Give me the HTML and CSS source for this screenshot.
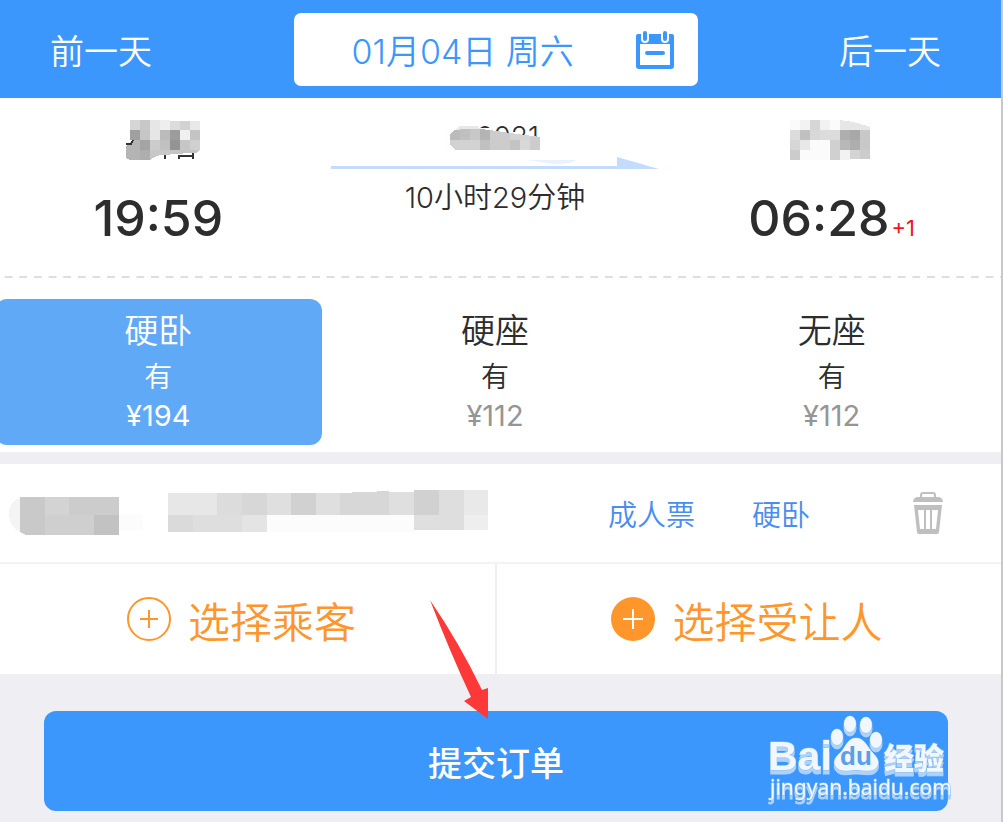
FILE: index.html
```html
<!DOCTYPE html>
<html lang="zh-CN">
<head>
    <meta charset="UTF-8">
    <meta name="viewport" content="width=device-width, initial-scale=1.0">
    <title>提交订单</title>
    <link rel="stylesheet" href="styles.css">
</head>
<body>
    <header class="date-bar">
        <button class="day-btn" type="button">前一天</button>
        <button class="date-btn" type="button">
            <span>01月04日 周六</span>
            <svg width="38" height="38" viewBox="0 0 38 38" aria-hidden="true">
                <path fill="#3b97fc" fill-rule="evenodd" d="M2 3h34q2 0 2 2v30q0 3-3 3H3q-3 0-3-3V5q0-2 2-2zM4 13v21h30V13z"/>
                <path stroke="#fff" stroke-width="8" stroke-linecap="round" d="M9 2v6M29 2v6"/>
                <path stroke="#3b97fc" stroke-width="4" stroke-linecap="round" d="M9 2v6M29 2v6M11 22h16"/>
            </svg>
        </button>
        <button class="day-btn" type="button">后一天</button>
    </header>

    <main>
        <section class="trip">
            <div class="stop">
                <svg class="mosaic" width="86" height="40" viewBox="-8 0 86 40" aria-hidden="true">
                    <path fill="#d6d6d6" d="M7 0h10v10H7z"/><path fill="#c8c8c8" d="M17 0h10v10H17z"/><path fill="#e6e6e6" d="M27 0h10v20H27z"/><path fill="#eee" d="M37 0h10v10H37z"/><path fill="#dcdcdc" d="M47 1h10v9H47z"/><path fill="#d2d2d2" d="M57 1h10v9H57z"/><path fill="#e8e8e8" d="M67 1h10v9H67z"/>
                    <path fill="#a0a0a0" d="M7 10h10v10H7z"/><path fill="#c6c6c6" d="M17 10h10v10H17z"/><path fill="#bbb" d="M37 10h10v10H37z"/><path fill="#9c9c9c" d="M47 10h10v10H47z"/><path fill="#f0f0f0" d="M57 10h10v10H57z"/><path fill="#c4c4c4" d="M67 10h10v10H67z"/>
                    <path fill="#b4b4b4" d="M3 26l7-6h7v20H7l-4-2z"/><path fill="#a4a4a4" d="M17 20h10v10H17z"/><path fill="#ccc" d="M27 20h10v10H27z"/><path fill="#c0c0c0" d="M37 20h10v10H37z"/><path fill="#949494" d="M47 20h10v10H47z"/><path fill="#c6c6c6" d="M57 20h10v10H57z"/><path fill="#d0d0d0" d="M67 20h10v10H67z"/>
                    <path fill="#aeaeae" d="M17 30h10v10H17z"/><path fill="#c8c8c8" d="M27 30h20v5H37l-7 3-3 2z"/><path fill="#c4c4c4" d="M47 30h30l-4 3-26 1z"/>
                    <path fill="none" stroke="#333" stroke-width="2" d="M3 24h5l2-4M42 35v4M56 35v4M55 36h14M70 33v6"/>
                </svg>
                <div class="time">19:59</div>
            </div>
            <div class="route">
                <svg class="mosaic" width="100" height="32" viewBox="0 0 100 32" aria-hidden="true">
                    <text class="train-no" x="94" y="27" text-anchor="end">0021</text>
                    <path fill="#fefefe" d="M0 8h50v20H0z"/>
                    <path fill="#e8e8e8" d="M10 10l4-4h18l6 4z"/>
                    <path fill="#bbb" d="M5 15l4-5h6v10H5z"/><path fill="#c0c0c0" d="M15 9h10v11H15z"/><path fill="#c8c8c8" d="M25 9h10v11H25z"/><path fill="#b4b4b4" d="M35 9l10 1v10H35z"/><path fill="#ccc" d="M45 10l20 3v7H45z"/><path fill="#d4d4d4" d="M65 13l30 4v3H65z"/>
                    <path fill="#d2d2d2" d="M5 20h30v10H10l-5-5z"/><path fill="#c0c0c0" d="M35 20h10v10H35z"/><path fill="#ccc" d="M45 20h20v10H45z"/><path fill="#c4c4c4" d="M65 20h10v10H65z"/><path fill="#d8d8d8" d="M75 20h10v10H75z"/><path fill="#ccc" d="M85 17h10v13H85z"/>
                </svg>
                <svg width="328" height="16" viewBox="0 0 328 16" aria-hidden="true">
                    <path fill="#e9f1fe" d="M196 4h49q-4 4-22 4z"/>
                    <path fill="#c3dcfd" d="M0 10h286V1l42 12H0z"/>
                </svg>
                <div class="duration">10小时29分钟</div>
            </div>
            <div class="stop">
                <svg class="mosaic" width="84" height="40" viewBox="0 0 84 40" aria-hidden="true">
                    <path fill="#fbfbfb" d="M0 0h50v40H0z"/><path fill="#f2f2f2" d="M10 0h10v10H10zM30 0h10v10H30zM50 30h10v10H50z"/><path fill="#d6d6d6" d="M20 0h10v10H20zM0 20h10v10H0z"/><path fill="#e6e6e6" d="M50 0l13 2 15 4 2 2v2H50z"/>
                    <path fill="#dcdcdc" d="M0 10h10v10H0zM30 10h20v10H30z"/><path fill="#c0c0c0" d="M10 10h10v10H10z"/><path fill="#d8d8d8" d="M20 10h10v10H20z"/><path fill="#aeaeae" d="M50 10h10v10H50zM60 20h10v10H60z"/><path fill="#a8a8a8" d="M60 10h10v10H60z"/><path fill="#c8c8c8" d="M70 10h10v20H70z"/>
                    <path fill="#e8e8e8" d="M10 20h10v10H10z"/><path fill="#d0d0d0" d="M40 20h10v20H40z"/><path fill="#b8b8b8" d="M50 20h10v10H50z"/>
                    <path fill="#ccc" d="M0 30h10v10H0zM70 30h10v9H70z"/><path fill="#d4d4d4" d="M60 30h10v9H60z"/>
                </svg>
                <div class="time">06:28<span class="next-day">+1</span></div>
            </div>
        </section>

        <section class="seats">
            <button class="seat active" type="button">
                <span class="seat-name">硬卧</span>
                <span class="seat-left">有</span>
                <span class="seat-price">¥194</span>
            </button>
            <button class="seat" type="button">
                <span class="seat-name">硬座</span>
                <span class="seat-left">有</span>
                <span class="seat-price">¥112</span>
            </button>
            <button class="seat" type="button">
                <span class="seat-name">无座</span>
                <span class="seat-left">有</span>
                <span class="seat-price">¥112</span>
            </button>
        </section>

        <section class="passenger">
            <svg class="mosaic" width="480" height="48" viewBox="0 0 480 48" aria-hidden="true">
                <path fill="#f4f4f4" d="M11 9Q0 12 0 25t11 18z"/>
                <path fill="#fcfcfc" d="M110 25h24v16h-24zM258 25h147v18H258z"/>
                <path fill="#c9c9c9" d="M11 8h25v38H17l-6-3z"/><path fill="#d3d3d3" d="M36 8h24v18H36z"/><path fill="#ccc" d="M60 8h50v18H60z"/>
                <path fill="#cfcfcf" d="M36 26h49v20H36z"/><path fill="#c2c2c2" d="M85 26h25v20H85z"/>
                <path fill="#e7e7e7" d="M159 4h49v22h-49z"/><path fill="#dcdcdc" d="M208 4h25v22h-25z"/><path fill="#d7d7d7" d="M233 4h25v22h-25z"/><path fill="#dfdfdf" d="M258 4h24v22h-24zM307 4h24v22h-24zM380 3h25v23h-25z"/><path fill="#d1d1d1" d="M282 4h25v22h-25zM405 1h25v25h-25z"/><path fill="#d7d7d7" d="M331 4l49-2v24h-49z"/><path fill="#dedede" d="M430 1h25v40h-25z"/><path fill="#e9e9e9" d="M455 1h24v25h-24z"/>
                <path fill="#dadada" d="M159 26h25v17h-25z"/><path fill="#dedede" d="M184 26h49v17h-49z"/><path fill="#e4e4e4" d="M233 26h25v17h-25z"/><path fill="#dfdfdf" d="M405 26h25v15h-25z"/><path fill="#eee" d="M455 26h24v15h-24z"/>
            </svg>
            <a class="tag" href="#">成人票</a>
            <a class="tag" href="#">硬卧</a>
            <button class="delete-btn" type="button" aria-label="删除">
                <svg width="30" height="42" viewBox="0 0 30 42" aria-hidden="true">
                    <path fill="none" stroke="#bfbfbf" stroke-width="2" d="M8 6V3q0-2 2-2h10q2 0 2 2v3"/>
                    <path fill="#bfbfbf" d="M4 5h22q4 1 4 5H0q0-4 4-5z"/>
                    <path fill="#bfbfbf" fill-rule="evenodd" d="M1 13h28l-3 27q0 2-2 2H6q-2 0-2-2zM5 18l2 19h4V18zM13 18v19h4V18zM19 18v19h4l2-19z"/>
                </svg>
            </button>
        </section>

        <section class="choose">
            <button class="choose-btn" type="button">
                <svg width="44" height="44" viewBox="0 0 44 44" aria-hidden="true">
                    <circle cx="22" cy="22" r="21" fill="none" stroke="#ff962b" stroke-width="2"/>
                    <path stroke="#ff962b" stroke-width="2" d="M22 13v18M13 22h18"/>
                </svg>
                <span>选择乘客</span>
            </button>
            <button class="choose-btn" type="button">
                <svg width="44" height="44" viewBox="0 0 44 44" aria-hidden="true">
                    <circle cx="22" cy="22" r="22" fill="#ff962b"/>
                    <path stroke="#fff" stroke-width="2" d="M22 12v20M12 22h20"/>
                </svg>
                <span>选择受让人</span>
            </button>
        </section>
    </main>

    <footer class="submit-bar">
        <button class="submit-btn" type="button">提交订单</button>

        <svg class="pointer" width="60" height="120" viewBox="0 0 60 120" aria-hidden="true">
            <path fill="#fd3838" d="M0 0q30 44 52 90l6-2v31L34 101l7-4Q20 52 0 0z"/>
        </svg>

        <svg class="watermark" width="180" height="90" viewBox="0 0 180 90" role="img" aria-label="百度经验">
            <g class="wm-front">
                <ellipse cx="68" cy="22" rx="6" ry="8"/>
                <ellipse cx="81" cy="9" rx="6" ry="8"/>
                <ellipse cx="97" cy="10" rx="6" ry="8"/>
                <ellipse cx="107" cy="25" rx="6" ry="8"/>
                <path d="M87 23c8 0 11 8 16 14 6 6 8 10 5 15-4 6-13 3-21 3s-15 3-20-3c-4-5-1-10 5-15 5-6 7-14 15-14z"/>
                <text class="wm-name" x="-1" y="55">Bai</text>
                <text class="wm-cn" x="115" y="54">经验</text>
                <text class="wm-url" x="1" y="80">jingyan.baidu.com</text>
            </g>
            <text class="wm-du" x="87" y="50" text-anchor="middle">du</text>
        </svg>
    </footer>
</body>
</html>
```

FILE: styles.css
```css
* {
    box-sizing: border-box;
}

body {
    margin: 0;
    min-height: 100vh;
    overflow-x: hidden;
    border-right: 2px solid #c8c8cc;
    background: #efeef3;
    color: #2d2d2d;
    font-family: Inter, "Noto Sans CJK SC", sans-serif;
    font-weight: 350;
}

button {
    margin: 0;
    padding: 0;
    border: none;
    background: none;
    color: inherit;
    font: inherit;
    cursor: pointer;
}

svg {
    display: block;
    flex-shrink: 0;
}

.mosaic {
    shape-rendering: crispEdges;
}

/* 日期切换 */
.date-bar {
    display: flex;
    align-items: center;
    justify-content: space-between;
    padding: 13px 60px 12px 50px;
    background: #3b97fc;
    color: #fff;
    font-size: 34px;
}

.date-btn {
    flex: 0 1 404px;
    display: flex;
    align-items: center;
    justify-content: space-between;
    height: 73px;
    padding: 0 24px 0 58px;
    border-radius: 7px;
    background: #fff;
    color: #3b97fc;
}

/* 车次信息 */
.trip,
.seats {
    display: grid;
    grid-template-columns: repeat(3, 1fr);
    margin-left: -10px;
    padding-right: 1px;
    background: #fff;
}

.trip {
    padding-top: 22px;
    padding-bottom: 28px;
}

.stop,
.route {
    display: flex;
    flex-direction: column;
    align-items: center;
}

.time {
    margin-top: 28px;
    font-size: 50px;
    font-weight: 500;
    line-height: 60px;
}

.next-day {
    margin-left: 2px;
    color: #f5141e;
    font-size: 22px;
    font-weight: 400;
    line-height: 1;
}

.train-no {
    fill: #2d2d2d;
    font-size: 28px;
}

.route {
    gap: 4px;
}

.duration {
    margin-top: 4px;
    font-size: 29px;
    line-height: 36px;
}

/* 席别 */
.seats {
    position: relative;
    padding-top: 23px;
    padding-bottom: 7px;
}

.seats::before {
    content: "";
    position: absolute;
    top: 0;
    left: 0;
    right: 0;
    height: 2px;
    background: linear-gradient(90deg, #dedede 8px, transparent 8px);
    background-size: calc(100% / 69) 2px;
}

.seat {
    display: flex;
    flex-direction: column;
    align-items: center;
    margin: 0 5px;
    padding: 8px 0 12px;
    border-radius: 12px;
}

.seat-name {
    font-size: 34px;
    line-height: 48px;
}

.seat-left {
    font-size: 28px;
    line-height: 44px;
}

.seat-price {
    color: #959595;
    font-size: 29px;
    font-weight: 400;
    line-height: 34px;
}

.seat.active {
    background: #60a9f6;
    color: #fff;
}

.seat.active .seat-price {
    color: #fff;
}

/* 乘客 */
.passenger {
    display: flex;
    align-items: center;
    margin-top: 12px;
    padding: 0 58px 0 9px;
    height: 98px;
    background: #fff;
}

.tag {
    margin-left: 57px;
    color: #4a8df0;
    font-size: 29px;
    text-decoration: none;
}

.mosaic + .tag {
    margin-left: auto;
}

.delete-btn {
    margin-left: 103px;
}

.choose {
    display: grid;
    grid-template-columns: 497fr 504fr;
    border-top: 2px solid #f3f3f5;
    background: #fff;
}

.choose-btn {
    display: flex;
    align-items: center;
    justify-content: center;
    gap: 17px;
    height: 110px;
    padding-right: 4px;
    color: #ff962b;
    font-size: 42px;
}

.choose-btn:first-child {
    padding-right: 12px;
    border-right: 2px solid #efeff2;
}

/* 提交 */
.submit-bar {
    position: relative;
    padding: 37px 53px 11px 44px;
}

.submit-btn {
    width: 100%;
    height: 100px;
    border-radius: 12px;
    background: #3b97fc;
    color: #fff;
    font-size: 34px;
    font-weight: 500;
}

.pointer {
    position: absolute;
    top: -74px;
    left: 43%;
    pointer-events: none;
}

.watermark {
    position: absolute;
    top: 41px;
    right: 52px;
    overflow: visible;
    pointer-events: none;
}

.wm-front {
    fill: #f0f7ff;
    stroke: #8fbdee;
    stroke-width: 1px;
    paint-order: stroke;
    filter: drop-shadow(0 4px 0 #add3fb);
}

.wm-name,
.wm-du {
    font-family: "Liberation Sans", sans-serif;
    font-weight: 700;
}

.wm-name {
    font-size: 41px;
}

.wm-du {
    fill: #5c9fe6;
    font-size: 26px;
}

.wm-cn {
    font-size: 30px;
    font-weight: 900;
}

.wm-url {
    font-family: "Noto Sans", sans-serif;
    font-size: 21px;
    font-weight: 400;
}
```
